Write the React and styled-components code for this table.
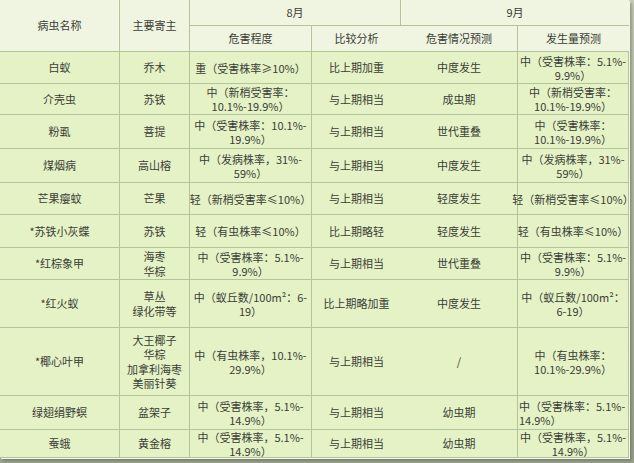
import React from 'react';
import styled, { createGlobalStyle } from 'styled-components';

const GlobalStyle = createGlobalStyle`
  html, body {
    margin: 0;
    padding: 0;
    width: 634px;
    height: 463px;
    overflow: hidden;
    background: #a4ac97;
  }
  body {
    font-family: "Noto Sans CJK SC", "Noto Sans", sans-serif;
    color: #3b3d36;
  }
`;

const Frame = styled.div`
  width: 634px;
  height: 463px;
  background: linear-gradient(to bottom, #c9d0bb, #9da590);
`;

const Table = styled.div`
  display: grid;
  width: 629px;
  height: 458px;
  grid-template-columns: 120px 70px 122px 89px 117px 111px;
  grid-template-rows: 26px 26px 32px 31px 34px 34px 32px 33px 32px 48px 68px 34px 28px;
  background: #e4f2c6;
  box-shadow: 1px 1px 0 #f3f6ea, 3px 3px 3px rgba(70, 80, 60, 0.45);
`;

const Cell = styled.div`
  box-sizing: border-box;
  display: flex;
  flex-direction: column;
  justify-content: center;
  align-items: ${(p) => (p.$left ? 'flex-start' : 'center')};
  padding: ${(p) => (p.$left ? '0 0 0 1px' : '0')};
  border-right: 1px solid #b3c39c;
  border-bottom: 1px solid #b3c39c;
  font-size: 11px;
  line-height: ${(p) => p.$lh || 13}px;
  text-align: center;
  white-space: nowrap;
  grid-column: ${(p) => p.$col || 'auto'};
  grid-row: ${(p) => p.$row || 'auto'};
  &:nth-child(6n) {
    border-right: none;
  }
`;

const HeadCell = styled(Cell)`
  background: #eff5e1;
  border-right: ${(p) => (p.$last ? 'none' : '1px solid #b3c39c')};
`;

const Line = styled.span`
  display: block;
`;

const rows = [
  ['白蚁', ['乔木'], ['重（受害株率≥10%）'], '比上期加重', '中度发生', ['中（受害株率：5.1%-', '9.9%）']],
  ['介壳虫', ['苏铁'], ['中（新梢受害率：', '10.1%-19.9%）'], '与上期相当', '成虫期', ['中（新梢受害率：', '10.1%-19.9%）']],
  ['粉虱', ['菩提'], ['中（受害株率：10.1%-', '19.9%）'], '与上期相当', '世代重叠', ['中（受害株率：', '10.1%-19.9%）']],
  ['煤烟病', ['高山榕'], ['中（发病株率，31%-', '59%）'], '与上期相当', '中度发生', ['中（发病株率，31%-', '59%）']],
  ['芒果瘿蚊', ['芒果'], ['轻（新梢受害率≤10%）'], '与上期相当', '轻度发生', ['轻（新梢受害率≤10%）']],
  ['*苏铁小灰蝶', ['苏铁'], ['轻（有虫株率≤10%）'], '比上期略轻', '轻度发生', ['轻（有虫株率≤10%）']],
  ['*红棕象甲', ['海枣', '华棕'], ['中（受害株率：5.1%-', '9.9%）'], '与上期相当', '世代重叠', ['中（受害株率：5.1%-', '9.9%）']],
  ['*红火蚁', ['草丛', '绿化带等'], ['中（蚁丘数/100m²：6-', '19）'], '比上期略加重', '中度发生', ['中（蚁丘数/100m²：', '6-19）']],
  ['*椰心叶甲', ['大王椰子', '华棕', '加拿利海枣', '美丽针葵'], ['中（有虫株率，10.1%-', '29.9%）'], '与上期相当', '/', ['中（有虫株率：', '10.1%-29.9%）']],
  ['绿翅绢野螟', ['盆架子'], ['中（受害株率，5.1%-', '14.9%）'], '与上期相当', '幼虫期', ['中（受害株率：5.1%-', '14.9%）'], true],
  ['蚕蛾', ['黄金榕'], ['中（受害株率，5.1%-', '14.9%）'], '与上期相当', '幼虫期', ['中（受害株率，5.1%-', '14.9%）']],
];

const Lines = ({ items }) => items.map((t, i) => <Line key={i}>{t}</Line>);

export default function App() {
  return (
    <>
      <GlobalStyle />
      <Frame>
        <Table>
          <HeadCell $row="1 / span 2" $col="1">病虫名称</HeadCell>
          <HeadCell $row="1 / span 2" $col="2">主要寄主</HeadCell>
          <HeadCell $row="1" $col="3 / span 2">8月</HeadCell>
          <HeadCell $row="1" $col="5 / span 2" $last>9月</HeadCell>
          <HeadCell $row="2" $col="3">危害程度</HeadCell>
          <HeadCell $row="2" $col="4">比较分析</HeadCell>
          <HeadCell $row="2" $col="5">危害情况预测</HeadCell>
          <HeadCell $row="2" $col="6" $last>发生量预测</HeadCell>
          {rows.map(([name, host, deg, cmp, pred, amount, left], i) => (
            <React.Fragment key={name}>
              <Cell $row={i + 3} $col="1">{name}</Cell>
              <Cell $row={i + 3} $col="2" $lh={host.length > 2 ? 14.5 : 15}><Lines items={host} /></Cell>
              <Cell $row={i + 3} $col="3" $lh={14}><Lines items={deg} /></Cell>
              <Cell $row={i + 3} $col="4">{cmp}</Cell>
              <Cell $row={i + 3} $col="5">{pred}</Cell>
              <Cell $row={i + 3} $col="6" $lh={14} $left={left}><Lines items={amount} /></Cell>
            </React.Fragment>
          ))}
        </Table>
      </Frame>
    </>
  );
}
